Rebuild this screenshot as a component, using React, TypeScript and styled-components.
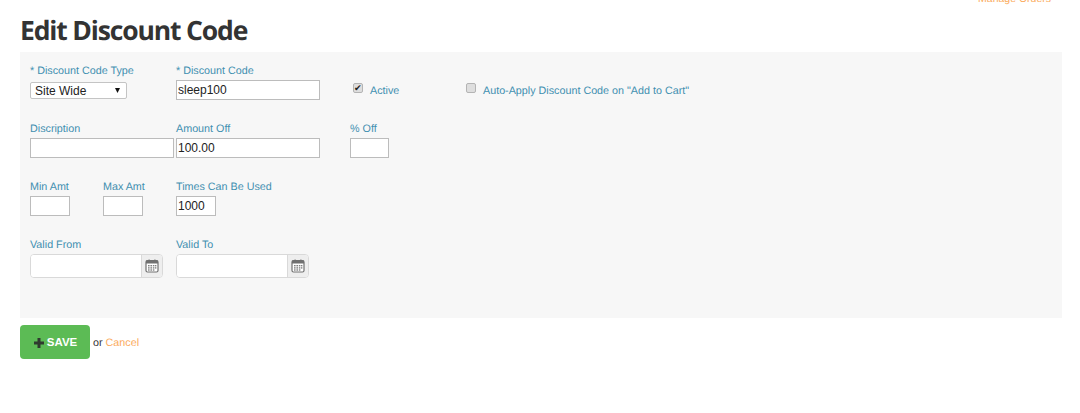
import React from "react";
import styled, { createGlobalStyle } from "styled-components";

const Global = createGlobalStyle`
  html, body { margin: 0; padding: 0; background: #fff; }
  body { font-family: "Liberation Sans", Arial, sans-serif; font-size: 10.75px; color: #333; text-rendering: geometricPrecision; }
  * { box-sizing: border-box; }
`;

const Page = styled.div`
  width: 1080px;
  height: 413px;
  overflow: hidden;
  padding: 0 18px 0 20px;
`;

const TopBar = styled.div`
  height: 6px;
  overflow: hidden;
  display: flex;
  justify-content: flex-end;
  align-items: flex-end;
  padding-right: 11px;
`;

const TopLink = styled.a`
  color: #fbab5d;
  font-size: 10.5px;
  line-height: 13px;
  flex: none;
`;

const Title = styled.h1`
  margin: 0;
  height: 46px;
  padding-top: 7px;
  font-family: "Open Sans", sans-serif;
  font-weight: 700;
  font-size: 26.5px;
  line-height: 34px;
  letter-spacing: -1.15px;
  color: #333;
`;

const Panel = styled.div`
  height: 266px;
  background: #f7f7f7;
  padding: 12px 10px 0;
  display: flex;
  flex-direction: column;
`;

const Row = styled.div`
  display: flex;
  height: 58px;
`;

const Field = styled.div<{ $w: number }>`
  width: ${(p) => p.$w}px;
  flex: none;
  display: flex;
  flex-direction: column;
`;

const Label = styled.label`
  height: 16px;
  line-height: 15px;
  font-size: 10.75px;
  color: #3f8fb0;
  white-space: nowrap;
`;

const TextInput = styled.input<{ $w: number }>`
  width: ${(p) => p.$w}px;
  height: 20px;
  border: 1px solid #bcbcbc;
  background: #fff;
  padding: 0 1px;
  margin: 0;
  font-family: "Liberation Sans", Arial, sans-serif;
  font-size: 12px;
  color: #222;
  border-radius: 0;
  outline: none;
`;

const SelectWrap = styled.div`
  position: relative;
  width: 97px;
  height: 17px;
  margin-top: 2px;
`;

const Select = styled.select`
  appearance: none;
  width: 100%;
  height: 100%;
  border: 1px solid #c4c4c4;
  border-radius: 2px;
  background: #fff;
  padding: 0 0 0 4px;
  font-family: "Liberation Sans", Arial, sans-serif;
  font-size: 12px;
  color: #222;
  outline: none;
`;

const Arrow = styled.svg`
  position: absolute;
  right: 7px;
  top: 6px;
  pointer-events: none;
`;

const CheckField = styled.label<{ $w: number }>`
  width: ${(p) => p.$w}px;
  flex: none;
  display: flex;
  align-items: center;
  height: 20px;
  margin-top: 17px;
  font-size: 10.75px;
  color: #3f8fb0;
  white-space: nowrap;
`;

const Check = styled.input`
  appearance: none;
  position: relative;
  flex: none;
  width: 10px;
  height: 10px;
  margin: -6px 7px 0 0;
  border: 1px solid #b4b4b4;
  border-radius: 2px;
  background: #dedede;
  &:checked::after {
    content: "✔";
    position: absolute;
    left: 0;
    top: -2px;
    font-size: 9px;
    line-height: 12px;
    color: #222;
  }
`;

const DateGroup = styled.div`
  width: 133px;
  height: 24px;
  display: flex;
  border: 1px solid #d9d9d9;
  border-radius: 4px;
  overflow: hidden;
  background: #fff;
`;

const DateInput = styled.input`
  flex: 1;
  min-width: 0;
  border: 0;
  background: #fff;
  outline: none;
`;

const DateAddon = styled.span`
  width: 21px;
  flex: none;
  display: flex;
  align-items: center;
  justify-content: center;
  background: #eee;
  border-left: 1px solid #d9d9d9;
`;

const Actions = styled.div`
  display: flex;
  align-items: center;
  margin-top: 7px;
  gap: 3px;
  font-size: 10.75px;
`;

const SaveButton = styled.button`
  width: 70px;
  height: 34px;
  border: 0;
  border-radius: 4px;
  background: #5cbb55;
  color: #fff;
  font-family: "Liberation Sans", Arial, sans-serif;
  font-weight: 700;
  font-size: 11.5px;
  display: flex;
  align-items: center;
  justify-content: center;
  gap: 3px;
  padding: 0 0 0 1px;
`;

const Or = styled.span`
  color: #333;
  padding-top: 1px;
`;

const Cancel = styled.a`
  color: #fbab5d;
  padding-top: 1px;
`;

const CalendarIcon = () => (
  <svg width="14" height="14" viewBox="0 0 14 14" fill="none">
    <rect x="1" y="1.5" width="12" height="11.5" rx="1.5" fill="#fff" stroke="#707070" strokeWidth="1.2" />
    <rect x="1" y="1.5" width="12" height="3" fill="#707070" />
    <rect x="3.5" y="0.5" width="1.2" height="2" fill="#707070" />
    <rect x="9.3" y="0.5" width="1.2" height="2" fill="#707070" />
    <g fill="#808080">
      <rect x="3" y="6" width="1.6" height="1.4" />
      <rect x="5.4" y="6" width="1.6" height="1.4" />
      <rect x="7.8" y="6" width="1.6" height="1.4" />
      <rect x="10" y="6" width="1.4" height="1.4" />
      <rect x="3" y="8.2" width="1.6" height="1.4" />
      <rect x="5.4" y="8.2" width="1.6" height="1.4" />
      <rect x="7.8" y="8.2" width="1.6" height="1.4" />
      <rect x="10" y="8.2" width="1.4" height="1.4" />
      <rect x="3" y="10.3" width="1.6" height="1.4" />
      <rect x="5.4" y="10.3" width="1.6" height="1.4" />
      <rect x="7.8" y="10.3" width="1.6" height="1.4" />
    </g>
  </svg>
);

const PlusIcon = () => (
  <svg width="10" height="10" viewBox="0 0 10 10" style={{ marginTop: 1 }}>
    <path d="M3.5 0h3v3.5H10v3H6.5V10h-3V6.5H0v-3h3.5z" fill="#2f3a2f" />
  </svg>
);

const DateField = ({ label, w }: { label: string; w: number }) => (
  <Field $w={w}>
    <Label>{label}</Label>
    <DateGroup>
      <DateInput />
      <DateAddon>
        <CalendarIcon />
      </DateAddon>
    </DateGroup>
  </Field>
);

export default function App() {
  return (
    <Page>
      <Global />
      <TopBar>
        <TopLink>Manage Orders</TopLink>
      </TopBar>
      <Title>Edit Discount Code</Title>
      <Panel>
        <Row>
          <Field $w={146}>
            <Label>* Discount Code Type</Label>
            <SelectWrap>
              <Select defaultValue="Site Wide">
                <option>Site Wide</option>
              </Select>
              <Arrow width="5" height="5" viewBox="0 0 5 5">
                <path d="M0 0h5L2.5 5z" fill="#111" />
              </Arrow>
            </SelectWrap>
          </Field>
          <Field $w={177}>
            <Label>* Discount Code</Label>
            <TextInput $w={144} defaultValue="sleep100" />
          </Field>
          <CheckField $w={113}>
            <Check type="checkbox" defaultChecked />
            Active
          </CheckField>
          <CheckField $w={300}>
            <Check type="checkbox" />
            Auto-Apply Discount Code on "Add to Cart"
          </CheckField>
        </Row>
        <Row>
          <Field $w={146}>
            <Label>Discription</Label>
            <TextInput $w={144} />
          </Field>
          <Field $w={174}>
            <Label>Amount Off</Label>
            <TextInput $w={144} defaultValue="100.00" />
          </Field>
          <Field $w={60}>
            <Label>% Off</Label>
            <TextInput $w={39} />
          </Field>
        </Row>
        <Row>
          <Field $w={73}>
            <Label>Min Amt</Label>
            <TextInput $w={40} />
          </Field>
          <Field $w={73}>
            <Label>Max Amt</Label>
            <TextInput $w={40} />
          </Field>
          <Field $w={120}>
            <Label>Times Can Be Used</Label>
            <TextInput $w={40} defaultValue="1000" />
          </Field>
        </Row>
        <Row>
          <DateField label="Valid From" w={146} />
          <DateField label="Valid To" w={146} />
        </Row>
      </Panel>
      <Actions>
        <SaveButton>
          <PlusIcon />
          SAVE
        </SaveButton>
        <Or>or</Or>
        <Cancel>Cancel</Cancel>
      </Actions>
    </Page>
  );
}
